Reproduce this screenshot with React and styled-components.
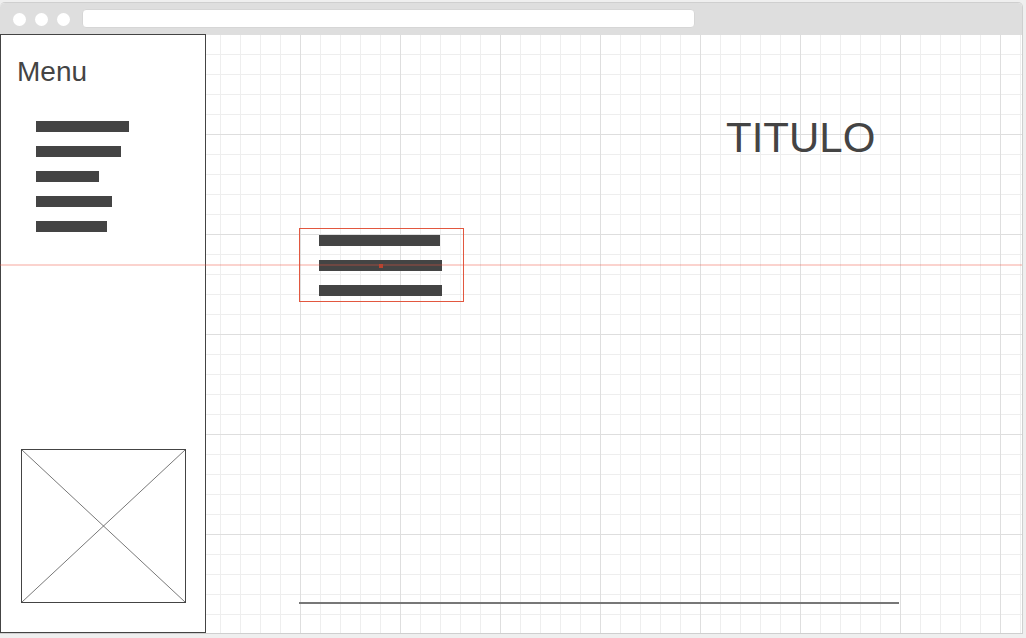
import React from "react";
import styled, { createGlobalStyle } from "styled-components";

const GlobalStyle = createGlobalStyle`
  html, body {
    margin: 0;
    padding: 0;
    background: #efefef;
    font-family: "Liberation Sans", Arial, sans-serif;
  }
  * {
    box-sizing: border-box;
  }
`;

const Page = styled.div`
  width: 1026px;
  height: 638px;
  padding-top: 2px;
  overflow: hidden;
`;

const Window = styled.div`
  width: 1023px;
  height: 632px;
  border: 1px solid #cfcfcf;
  border-left: none;
  border-radius: 5px 5px 0 0;
  display: flex;
  flex-direction: column;
  background: #fff;
  overflow: hidden;
`;

const Chrome = styled.div`
  height: 31px;
  flex-shrink: 0;
  background: #dedede;
  display: flex;
  align-items: flex-start;
  padding-left: 13px;
`;

const Dot = styled.span`
  width: 13px;
  height: 13px;
  margin-top: 10px;
  margin-right: 9px;
  border-radius: 50%;
  background: #fff;
`;

const UrlBar = styled.div`
  width: 613px;
  height: 19px;
  margin-top: 6px;
  margin-left: 3px;
  border-radius: 4px;
  background: #fff;
  border: 1px solid #d6d6d6;
`;

const Canvas = styled.div`
  position: relative;
  flex: 1;
  display: flex;
  background-color: #fff;
  background-image: linear-gradient(to right, #dedede 1px, transparent 1px),
    linear-gradient(to bottom, #dedede 1px, transparent 1px),
    linear-gradient(to right, #eeeeee 1px, transparent 1px),
    linear-gradient(to bottom, #eeeeee 1px, transparent 1px);
  background-size: 100px 100px, 100px 100px, 20px 20px, 20px 20px;
`;

const Sidebar = styled.aside`
  width: 206px;
  height: 599px;
  border: 1px solid #444;
  background: #fff;
  display: flex;
  flex-direction: column;
  padding: 23px 0 0 16px;
`;

const MenuTitle = styled.div`
  font-size: 28px;
  line-height: 28px;
  color: #444;
`;

const MenuList = styled.div`
  display: flex;
  flex-direction: column;
  gap: 14px;
  margin-top: 35px;
  margin-left: 19px;
`;

const Bar = styled.div`
  height: 11px;
  width: ${(p) => p.w}px;
  background: #444;
`;

const ImageBox = styled.svg`
  display: block;
  margin-top: auto;
  margin-bottom: 29px;
  margin-left: 4px;
`;

const Main = styled.main`
  flex: 1;
  display: flex;
  flex-direction: column;
  align-items: flex-start;
  padding-left: 93px;
`;

const Title = styled.h1`
  margin: 83px 0 0 427px;
  font-size: 42px;
  line-height: 42px;
  font-weight: normal;
  color: #444;
`;

const Burger = styled.div`
  width: 165px;
  height: 74px;
  margin-top: 69px;
  border: 1px solid #e2573f;
  padding: 6px 0 0 19px;
  display: flex;
  flex-direction: column;
  gap: 14px;
`;

const Rule = styled.div`
  width: 600px;
  height: 2px;
  margin-top: auto;
  margin-bottom: 29px;
  background: #777;
`;

const GuideLine = styled.div`
  position: absolute;
  left: 0;
  right: 0;
  top: 230px;
  height: 2px;
  background: rgba(240, 80, 60, 0.25);
`;

const GuideDot = styled.div`
  position: absolute;
  left: 379px;
  top: 230px;
  width: 4px;
  height: 4px;
  background: #b8432f;
`;

const sideBars = [93, 85, 63, 76, 71];
const burgerBars = [121, 123, 123];

export default function App() {
  return (
    <Page>
      <GlobalStyle />
      <Window>
        <Chrome>
          <Dot />
          <Dot />
          <Dot />
          <UrlBar />
        </Chrome>
        <Canvas>
          <Sidebar>
            <MenuTitle>Menu</MenuTitle>
            <MenuList>
              {sideBars.map((w, i) => (
                <Bar key={i} w={w} />
              ))}
            </MenuList>
            <ImageBox width="165" height="154" viewBox="0 0 165 154">
              <rect x="0.5" y="0.5" width="164" height="153" fill="#fff" stroke="#444" />
              <line x1="1" y1="1" x2="164" y2="153" stroke="#555" strokeWidth="0.8" />
              <line x1="164" y1="1" x2="1" y2="153" stroke="#555" strokeWidth="0.8" />
            </ImageBox>
          </Sidebar>
          <Main>
            <Title>TITULO</Title>
            <Burger>
              {burgerBars.map((w, i) => (
                <Bar key={i} w={w} />
              ))}
            </Burger>
            <Rule />
          </Main>
          <GuideLine />
          <GuideDot />
        </Canvas>
      </Window>
    </Page>
  );
}
